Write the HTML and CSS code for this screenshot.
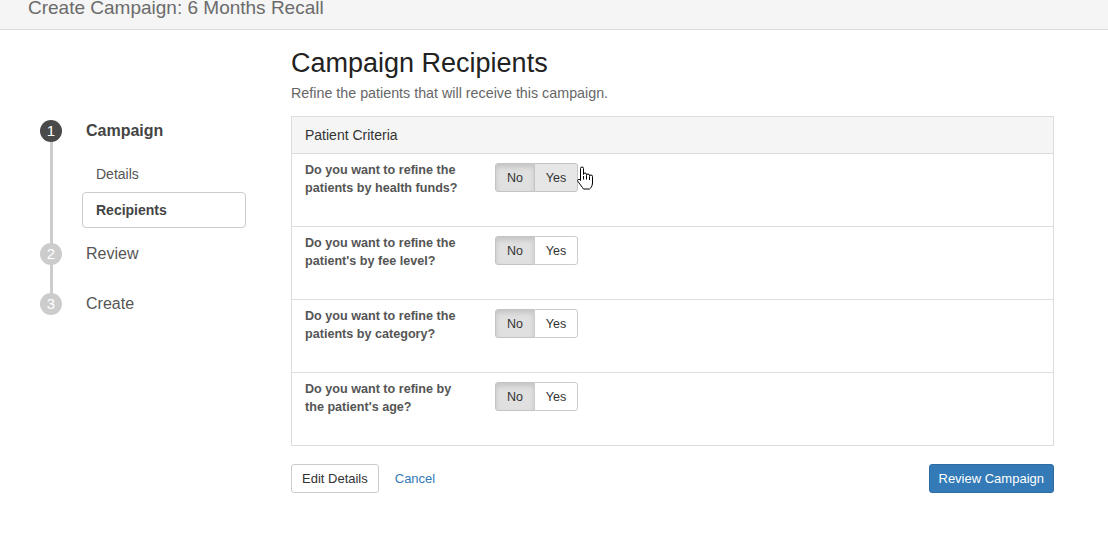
FILE: index.html
```html
<!DOCTYPE html>
<html lang="en">
<head>
    <meta charset="UTF-8">
    <meta name="viewport" content="width=device-width, initial-scale=1.0">
    <title>Create Campaign</title>
    <link rel="stylesheet" href="styles.css">
</head>
<body>
    <!-- Page title bar -->
    <div class="title-bar">
        <h1>Create Campaign: 6 Months Recall</h1>
    </div>

    <div class="page">
        <!-- Wizard steps -->
        <ol class="steps">
            <li class="step active">
                <div class="step-head">
                    <span class="step-num">1</span>
                    <span class="step-name">Campaign</span>
                </div>
                <ul class="substeps">
                    <li class="substep">Details</li>
                    <li class="substep current">Recipients</li>
                </ul>
            </li>
            <li class="step">
                <div class="step-head">
                    <span class="step-num">2</span>
                    <span class="step-name">Review</span>
                </div>
            </li>
            <li class="step">
                <div class="step-head">
                    <span class="step-num">3</span>
                    <span class="step-name">Create</span>
                </div>
            </li>
        </ol>

        <!-- Recipients form -->
        <div class="main">
            <h2>Campaign Recipients</h2>
            <p class="lead">Refine the patients that will receive this campaign.</p>

            <div class="panel">
                <div class="panel-heading">Patient Criteria</div>

                <div class="criteria-row">
                    <label class="criteria-label">Do you want to refine the patients by health funds?</label>
                    <div class="toggle">
                        <button class="toggle-btn no on">No</button>
                        <button class="toggle-btn yes hover">Yes</button>
                        <svg class="cursor" width="20" height="24" viewBox="0 0 20 24">
                            <path d="M5.5 14.5V2.5a1.5 1.5 0 0 1 3 0V8.5a1.5 1.5 0 0 1 3 0V9.5a1.5 1.5 0 0 1 3 0V10.5a1.5 1.5 0 0 1 3 0V17c0 3-2 5.5-3 6H8.5c-1-1.5-3-4-5.5-7.5a1.3 1.3 0 0 1 2-1.7z" fill="#fff" stroke="#000" stroke-width="1" stroke-linejoin="round"/>
                            <path d="M8.5 10v3.5M11.5 10v3.5M14.5 11v3" stroke="#000" stroke-width="1" fill="none"/>
                        </svg>
                    </div>
                </div>

                <div class="criteria-row">
                    <label class="criteria-label">Do you want to refine the patient's by fee level?</label>
                    <div class="toggle">
                        <button class="toggle-btn no on">No</button>
                        <button class="toggle-btn yes">Yes</button>
                    </div>
                </div>

                <div class="criteria-row">
                    <label class="criteria-label">Do you want to refine the patients by category?</label>
                    <div class="toggle">
                        <button class="toggle-btn no on">No</button>
                        <button class="toggle-btn yes">Yes</button>
                    </div>
                </div>

                <div class="criteria-row">
                    <label class="criteria-label">Do you want to refine by the patient's age?</label>
                    <div class="toggle">
                        <button class="toggle-btn no on">No</button>
                        <button class="toggle-btn yes">Yes</button>
                    </div>
                </div>
            </div>

            <div class="actions">
                <button class="btn">Edit Details</button>
                <a class="link" href="#">Cancel</a>
                <button class="btn btn-primary">Review Campaign</button>
            </div>
        </div>
    </div>
</body>
</html>
```

FILE: styles.css
```css
body {
    font-family: "Liberation Sans", Arial, sans-serif;
    margin: 0;
    padding: 0;
    color: #333;
    background: #fff;
}

/* Title bar */
.title-bar {
    height: 29px;
    padding-left: 28px;
    background: #f5f5f5;
    border-bottom: 1px solid #dcdcdc;
    overflow: hidden;
}
.title-bar h1 {
    margin: -2px 0 0;
    font-size: 19px;
    line-height: 19px;
    font-weight: normal;
    color: #6b6b6b;
}

.page {
    display: flex;
    align-items: flex-start;
    padding-left: 40px;
}

/* Wizard steps */
.steps {
    position: relative;
    width: 206px;
    margin: 90px 0 0;
    padding: 0;
    list-style: none;
}
.steps::before {
    content: "";
    position: absolute;
    left: 10px;
    top: 11px;
    bottom: 11px;
    width: 3px;
    background: #ccc;
}
.step {
    position: relative;
    margin-bottom: 28px;
}
.step:last-child {
    margin-bottom: 0;
}
.step-head {
    display: flex;
    align-items: center;
    height: 22px;
}
.step-num {
    width: 22px;
    height: 22px;
    border-radius: 50%;
    background: #ccc;
    color: #fff;
    font-size: 15px;
    line-height: 22px;
    text-align: center;
}
.step-name {
    margin-left: 24px;
    font-size: 16px;
    color: #555;
}
.step.active .step-num {
    background: #4a4a4a;
}
.step.active .step-name {
    font-weight: bold;
    color: #444;
}
.substeps {
    margin: 14px 0 -13px 42px;
    padding: 0;
    list-style: none;
}
.substep {
    height: 36px;
    box-sizing: border-box;
    padding-left: 13px;
    border: 1px solid transparent;
    border-radius: 4px;
    font-size: 14px;
    line-height: 34px;
    color: #555;
}
.substep.current {
    border-color: #ccc;
    font-weight: bold;
    color: #444;
}

/* Main column */
.main {
    width: 763px;
    margin-left: 45px;
}
.main h2 {
    margin: 18px 0 0;
    font-size: 27px;
    line-height: 30px;
    font-weight: normal;
    color: #222;
}
.lead {
    margin: 5px 0 13px;
    font-size: 14.3px;
    line-height: 20px;
    color: #666;
}

.panel {
    border: 1px solid #ddd;
}
.panel-heading {
    padding: 8px 13px;
    font-size: 14px;
    line-height: 20px;
    background: #f5f5f5;
    border-bottom: 1px solid #ddd;
}
.criteria-row {
    display: grid;
    grid-template-columns: 165px auto;
    column-gap: 25px;
    align-items: start;
    height: 72px;
    padding: 7px 13px 0;
    box-sizing: border-box;
}
.criteria-row + .criteria-row {
    border-top: 1px solid #ddd;
    height: 73px;
}
.criteria-label {
    font-size: 12.6px;
    font-weight: bold;
    line-height: 18px;
    color: #555;
}

/* Yes / No toggle */
.toggle {
    position: relative;
    display: flex;
    margin-top: 2px;
}
.toggle-btn {
    height: 29px;
    padding: 0;
    font-family: inherit;
    font-size: 12.5px;
    color: #333;
    background: #fff;
    border: 1px solid #ccc;
    cursor: pointer;
}
.toggle-btn.no {
    width: 40px;
    border-radius: 3px 0 0 3px;
}
.toggle-btn.yes {
    width: 44px;
    margin-left: -1px;
    border-radius: 0 3px 3px 0;
}
.toggle-btn.on {
    background: #e0e0e0;
    border-color: #c4c4c4;
    box-shadow: inset 0 3px 5px rgba(0, 0, 0, 0.125);
}
.toggle-btn.hover {
    background: #e6e6e6;
    border-color: #c4c4c4;
}
.cursor {
    position: absolute;
    left: 80px;
    top: 3px;
}

/* Footer buttons */
.actions {
    display: flex;
    align-items: center;
    margin-top: 18px;
}
.btn {
    height: 29px;
    padding: 0 10px;
    font-family: inherit;
    font-size: 13px;
    color: #333;
    background: #fff;
    border: 1px solid #ccc;
    border-radius: 3px;
    cursor: pointer;
}
.link {
    margin-left: 16px;
    font-size: 13px;
    color: #337ab7;
    text-decoration: none;
}
.btn-primary {
    margin-left: auto;
    padding: 0 9px;
    color: #fff;
    background: #337ab7;
    border-color: #2e6da4;
}
```
